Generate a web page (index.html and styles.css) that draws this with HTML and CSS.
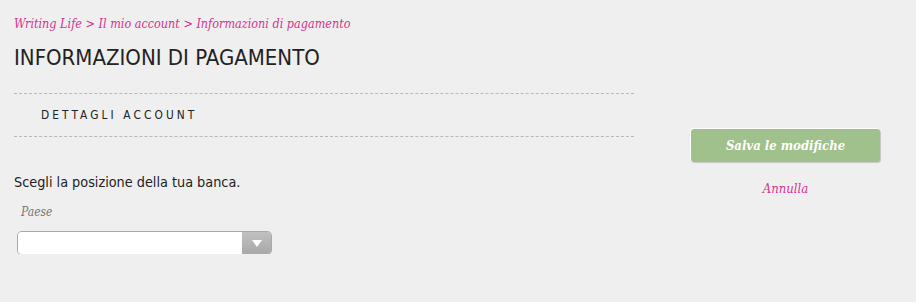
FILE: index.html
```html
<!DOCTYPE html>
<html lang="it">
<head>
<meta charset="utf-8">
<title>Informazioni di pagamento</title>
<link rel="stylesheet" href="styles.css">
</head>
<body>
<div class="page">
  <div class="main">
    <nav class="crumbs"><a href="#">Writing Life</a> &gt; <a href="#">Il mio account</a> &gt; <a href="#">Informazioni di pagamento</a></nav>
    <h1 class="title">INFORMAZIONI DI PAGAMENTO</h1>
    <div class="section-head">DETTAGLI ACCOUNT</div>
    <p class="intro">Scegli la posizione della tua banca.</p>
    <label class="field-label">Paese</label>
    <div class="select">
      <div class="select-box"></div>
      <div class="select-arrow"><span class="tri"></span></div>
    </div>
  </div>
  <aside class="side">
    <button class="save">Salva le modifiche</button>
    <a class="cancel" href="#">Annulla</a>
  </aside>
</div>
</body>
</html>
```
FILE: styles.css
```css
html, body {
  margin: 0;
  padding: 0;
  background: #efefef;
}
body {
  font-family: "DejaVu Sans Condensed", "DejaVu Sans", sans-serif;
  color: #222;
}
.page {
  display: flex;
  padding: 0 14px;
}
.main {
  width: 620px;
  display: flex;
  flex-direction: column;
  align-items: flex-start;
}
.crumbs {
  font-family: "DejaVu Serif Condensed", "DejaVu Serif", serif;
  font-style: italic;
  font-size: 12.5px;
  color: #d6338f;
  margin-top: 16px;
  line-height: 16px;
}
.crumbs a {
  color: #d6338f;
  text-decoration: none;
}
.title {
  font-family: "DejaVu Sans Condensed", "DejaVu Sans", sans-serif;
  font-weight: normal;
  font-size: 22px;
  line-height: 26px;
  margin: 13px 0 0;
  color: #222;
}
.section-head {
  align-self: stretch;
  margin-top: 22px;
  border-top: 1px dashed #b8b8b8;
  border-bottom: 1px dashed #b8b8b8;
  padding: 13px 0 13px 27px;
  font-size: 11.8px;
  line-height: 16px;
  letter-spacing: 3.1px;
  color: #222;
}
.intro {
  margin: 36px 0 0;
  font-size: 14.3px;
  line-height: 18px;
}
.field-label {
  font-family: "DejaVu Serif Condensed", "DejaVu Serif", serif;
  font-style: italic;
  font-size: 12px;
  color: #777;
  margin: 13px 0 0 7px;
  line-height: 16px;
}
.select {
  display: flex;
  margin: 12px 0 0 4px;
  width: 253px;
  height: 22px;
  border-radius: 4px;
  box-shadow: 0 0 0 1px #a9a9a9;
  overflow: hidden;
}
.select-box {
  flex: 1;
  background: #fff;
}
.select-arrow {
  width: 29px;
  background: linear-gradient(#c0c0c0, #a8a8a8);
  display: flex;
  align-items: center;
  justify-content: center;
}
.tri {
  width: 0;
  height: 0;
  border-left: 5px solid transparent;
  border-right: 5px solid transparent;
  border-top: 7px solid #fff;
}
.side {
  margin-left: 57px;
  margin-top: 129px;
  width: 189px;
  display: flex;
  flex-direction: column;
  align-items: center;
}
.save {
  width: 189px;
  height: 33px;
  background: #a0c08c;
  border: none;
  border-radius: 3px;
  box-shadow: 1px 1px 0 #c8c8c8, -1px -1px 0 #fff;
  color: #fff;
  font-family: "DejaVu Serif Condensed", "DejaVu Serif", serif;
  font-style: italic;
  font-weight: bold;
  font-size: 13px;
  cursor: pointer;
}
.cancel {
  margin-top: 19px;
  font-family: "DejaVu Serif Condensed", "DejaVu Serif", serif;
  font-style: italic;
  font-size: 13px;
  color: #d6338f;
  text-decoration: none;
}
```
